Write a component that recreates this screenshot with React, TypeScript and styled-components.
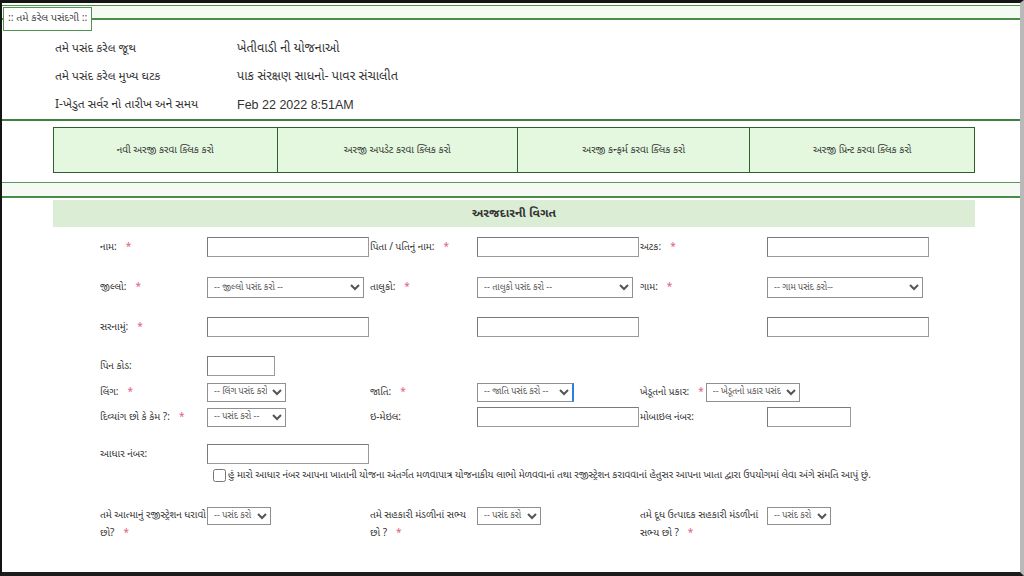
import React from "react";
import styled, { createGlobalStyle } from "styled-components";

const GU = `"Noto Sans Gujarati", "Lohit Gujarati", "Shruti", "Liberation Sans", Arial, sans-serif`;

const Global = createGlobalStyle`
  html, body { margin: 0; padding: 0; background: #fff; }
  body { font-family: ${GU}; color: #333; }
  * { box-sizing: border-box; }
`;

const Frame = styled.div`
  width: 1024px;
  height: 576px;
  overflow: hidden;
  border-top: 3px solid #141414;
  border-left: 2px solid #141414;
  border-right: 4px solid #b9b9b9;
  border-bottom: 4px solid #1c1c1c;
  background: #fff;
  display: flex;
  flex-direction: column;
`;

const TopZone = styled.div`
  margin-top: 2px;
  border-top: 1px solid #4f944f;
  background: #f3fbf2;
  padding-top: 1px;
`;

const Choice = styled.fieldset`
  margin: 0;
  padding: 0;
  border: none;
  border-top: 2px solid #4a8d4a;
  border-bottom: 2px solid #3f7f3f;
  background: #fff;
  min-inline-size: 0;
`;

const Legend = styled.legend`
  margin-left: 1px;
  padding: 4px 4px 4px;
  border: 1px solid #4f944f;
  background: #fff;
  font-size: 10.5px;
  line-height: 14px;
  color: #444;
`;

const InfoGrid = styled.div`
  display: grid;
  grid-template-columns: 182px 1fr;
  grid-auto-rows: 28px;
  align-items: center;
  padding: 4px 0 0 53px;
  font-size: 12px;
`;

const InfoValue = styled.span<{ $latin?: boolean }>`
  font-family: ${(p) => (p.$latin ? `"Liberation Sans", Arial, sans-serif` : GU)};
  font-size: ${(p) => (p.$latin ? "12.5px" : "12.6px")};
  color: #333;
`;

const ButtonBar = styled.div`
  margin: 6px 0 0 51px;
  width: 922px;
  height: 46px;
  display: grid;
  grid-template-columns: 223fr 241fr 233fr 225fr;
  border: 1px solid #2f5f2f;
  background: #e3f8de;
`;

const BarButton = styled.div`
  display: flex;
  align-items: center;
  justify-content: center;
  font-size: 10px;
  color: #333;
  border-left: 1px solid #2f5f2f;
  &:first-child { border-left: none; }
`;

const Divider = styled.div`
  margin-top: 9px;
  height: 16px;
  border-top: 1px solid #5a995a;
  border-bottom: 2px solid #4a8a4a;
  background: #f5fbf4;
`;

const SectionTitle = styled.div`
  margin: 2px 0 0 51px;
  width: 922px;
  height: 27px;
  background: #dbeed5;
  display: flex;
  align-items: center;
  justify-content: center;
  font-weight: bold;
  font-size: 12px;
  color: #333;
`;

const Form = styled.div`
  display: flex;
  flex-direction: column;
  padding-left: 98px;
`;

const Row = styled.div<{ $gap: number; $top?: boolean }>`
  margin-top: ${(p) => p.$gap}px;
  display: grid;
  grid-template-columns: 107px 163px 107px 163px 127px 1fr;
  align-items: ${(p) => (p.$top ? "start" : "center")};
  min-height: 20px;
`;

const Label = styled.span`
  font-size: 10px;
  color: #333;
  line-height: 17px;
  white-space: nowrap;
`;

const Req = styled.span`
  color: #e2607c;
  font-size: 10px;
  margin-left: 9px;
`;

const TextBox = styled.input<{ $w: number }>`
  width: ${(p) => p.$w}px;
  height: 20px;
  border: 1px solid #9a9a9a;
  border-top-color: #7a7a7a;
  border-left-color: #7a7a7a;
  background: #fff;
  padding: 0 3px;
  font-size: 11px;
  font-family: ${GU};
`;

const Picker = styled.select<{ $w: number; $focus?: boolean; $h?: number }>`
  width: ${(p) => p.$w}px;
  height: ${(p) => p.$h ?? 20}px;
  border: 1px solid #8f8f8f;
  border-right: ${(p) => (p.$focus ? "2px solid #2f7de0" : "1px solid #8f8f8f")};
  border-radius: 0;
  background: #fff;
  font-size: 9px;
  color: #555;
  font-family: ${GU};
  padding: 0 2px;
`;

const Inline = styled.div`
  display: flex;
  align-items: center;
  gap: 2px;
  grid-column: span 2;
`;

const ConsentRow = styled.label`
  margin: 5px 0 0 113px;
  display: flex;
  align-items: center;
  gap: 2px;
  font-size: 10px;
  color: #333;
  white-space: nowrap;
`;

const Box = styled.input`
  width: 13px;
  height: 13px;
  margin: 0;
`;

const WrapLabel = styled.span`
  font-size: 10px;
  line-height: 18px;
  color: #333;
  white-space: nowrap;
`;

type Opt = { label: string; w: number; focus?: boolean; h?: number };

const Sel = ({ label, w, focus, h }: Opt) => (
  <Picker $w={w} $focus={focus} $h={h} defaultValue="0">
    <option value="0">{label}</option>
  </Picker>
);

const R = () => <Req>*</Req>;

export default function App() {
  return (
    <>
      <Global />
      <Frame>
        <TopZone>
          <Choice>
            <Legend>:: તમે કરેલ પસંદગી ::</Legend>
            <InfoGrid>
              <span>તમે પસંદ કરેલ જૂથ</span>
              <InfoValue>ખેતીવાડી ની યોજનાઓ</InfoValue>
              <span>તમે પસંદ કરેલ મુખ્ય ઘટક</span>
              <InfoValue>પાક સંરક્ષણ સાધનો- પાવર સંચાલીત</InfoValue>
              <span>I-ખેડુત સર્વર નો તારીખ અને સમય</span>
              <InfoValue $latin>Feb 22 2022 8:51AM</InfoValue>
            </InfoGrid>
          </Choice>
        </TopZone>

        <ButtonBar>
          <BarButton>નવી અરજી કરવા ક્લિક કરો</BarButton>
          <BarButton>અરજી અપડેટ કરવા ક્લિક કરો</BarButton>
          <BarButton>અરજી કન્ફર્મ કરવા ક્લિક કરો</BarButton>
          <BarButton>અરજી પ્રિન્ટ કરવા ક્લિક કરો</BarButton>
        </ButtonBar>

        <Divider />

        <SectionTitle>અરજદારની વિગત</SectionTitle>

        <Form>
          <Row $gap={10}>
            <Label>નામ:<R /></Label>
            <TextBox $w={162} />
            <Label>પિતા / પતિનું નામ:<R /></Label>
            <TextBox $w={162} />
            <Label>અટક:<R /></Label>
            <TextBox $w={162} />
          </Row>
          <Row $gap={20}>
            <Label>જીલ્લો:<R /></Label>
            <Sel label="-- જીલ્લો પસંદ કરો --" w={157} h={21} />
            <Label>તાલુકો:<R /></Label>
            <Sel label="-- તાલુકો પસંદ કરો --" w={156} h={21} />
            <Label>ગામ:<R /></Label>
            <Sel label="-- ગામ પસંદ કરો--" w={156} h={21} />
          </Row>
          <Row $gap={19}>
            <Label>સરનામું:<R /></Label>
            <TextBox $w={162} />
            <span />
            <TextBox $w={162} />
            <span />
            <TextBox $w={162} />
          </Row>
          <Row $gap={19}>
            <Label>પિન કોડ:</Label>
            <TextBox $w={68} />
          </Row>
          <Row $gap={6}>
            <Label>લિંગ:<R /></Label>
            <Sel label="-- લિંગ પસંદ કરો" w={79} h={19} />
            <Label>જાતિ:<R /></Label>
            <Sel label="-- જાતિ પસંદ કરો --" w={97} h={19} focus />
            <Inline>
              <Label>ખેડૂતનો પ્રકાર:<R /></Label>
              <Sel label="-- ખેડૂતનો પ્રકાર પસંદ કરો" w={94} h={19} />
            </Inline>
          </Row>
          <Row $gap={5}>
            <Label>દિવ્યાંગ છો કે કેમ ?:<R /></Label>
            <Sel label="-- પસંદ કરો --" w={79} h={19} />
            <Label>ઇ-મેઇલ:</Label>
            <TextBox $w={162} />
            <Label>મોબાઇલ નંબર:</Label>
            <TextBox $w={84} />
          </Row>
          <Row $gap={17}>
            <Label>આધાર નંબર:</Label>
            <TextBox $w={162} />
          </Row>
          <ConsentRow>
            <Box type="checkbox" />
            હું મારો આધાર નંબર આપના ખાતાની યોજના અંતર્ગત મળવાપાત્ર યોજનાકીય લાભો મેળવવાનાં તથા રજીસ્ટ્રેશન કરાવવાનાં હેતુસર આપના ખાતા દ્વારા ઉપયોગમાં લેવા અંગે સંમતિ આપું છું.
          </ConsentRow>
          <Row $gap={25} $top>
            <WrapLabel>
              તમે આત્માનું રજીસ્ટ્રેશન ધરાવો
              <br />
              છો?<R />
            </WrapLabel>
            <Sel label="-- પસંદ કરો -" w={64} h={18} />
            <WrapLabel>
              તમે સહકારી મંડળીનાં સભ્ય
              <br />
              છો ?<R />
            </WrapLabel>
            <Sel label="-- પસંદ કરો -" w={64} h={18} />
            <WrapLabel>
              તમે દૂધ ઉત્પાદક સહકારી મંડળીનાં
              <br />
              સભ્ય છો ?<R />
            </WrapLabel>
            <Sel label="-- પસંદ કરો -" w={64} h={18} />
          </Row>
        </Form>
      </Frame>
    </>
  );
}
